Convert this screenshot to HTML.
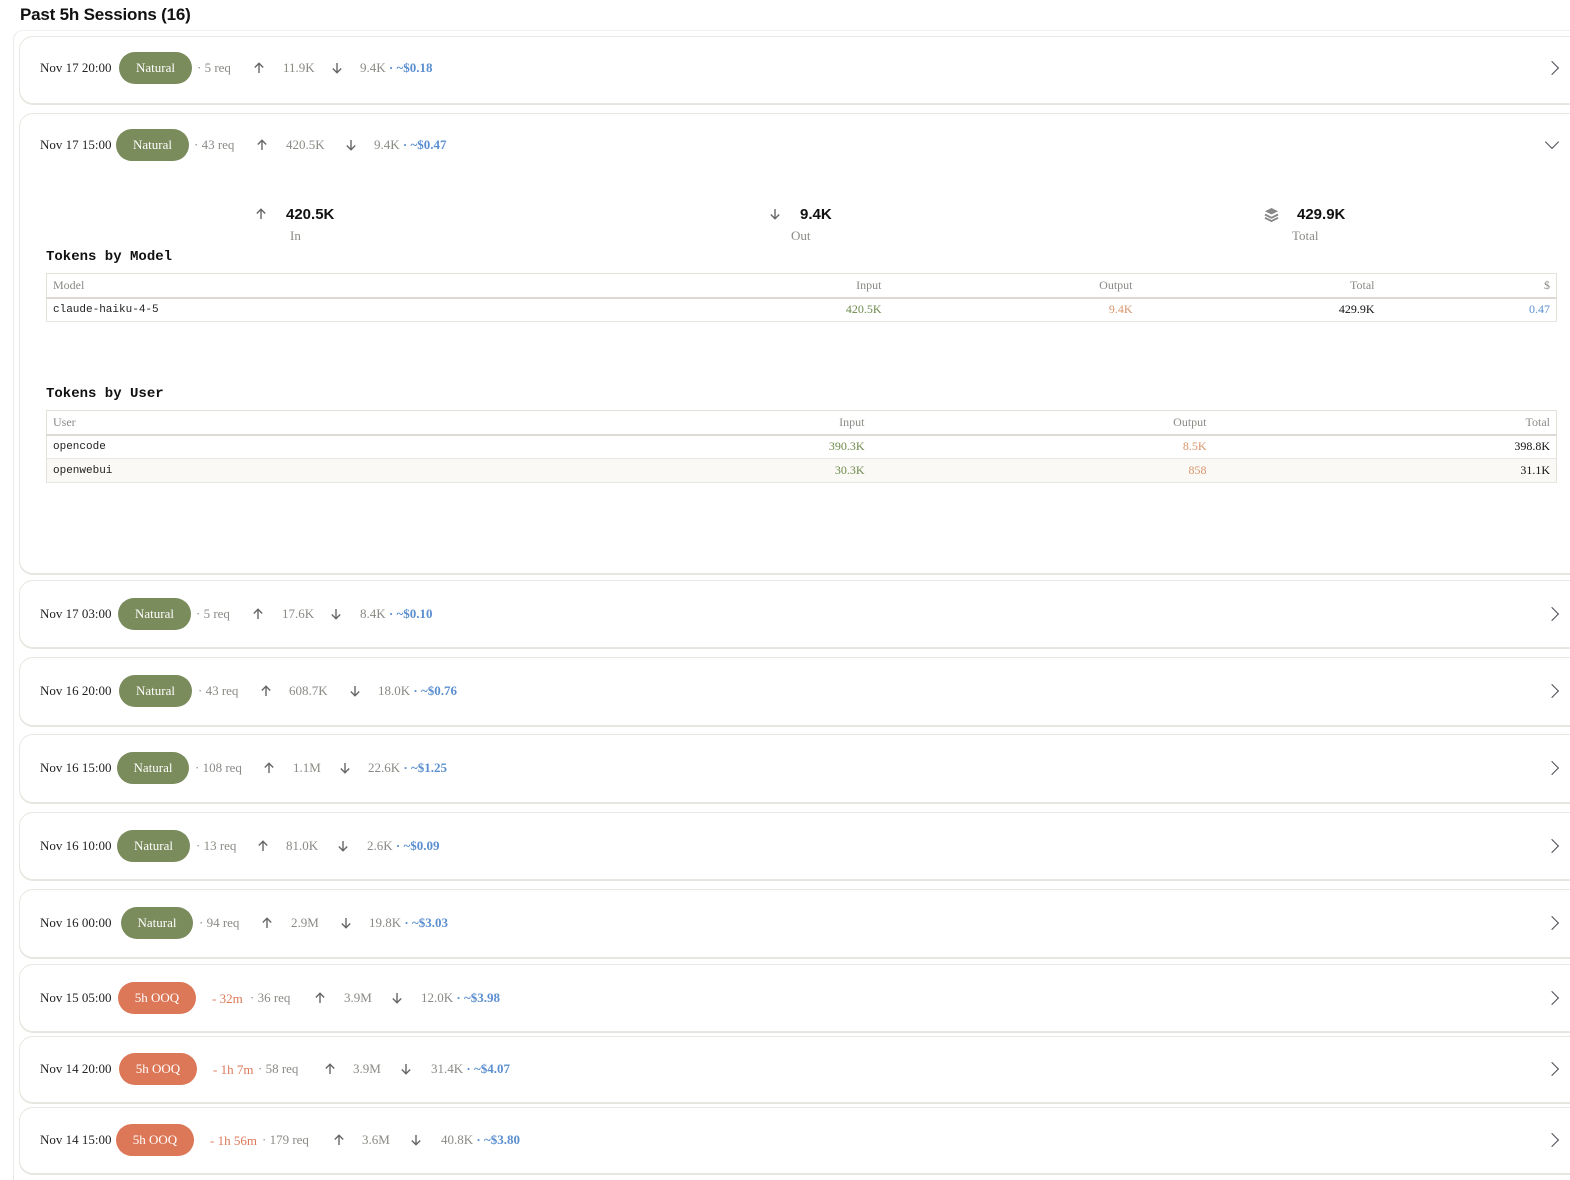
<!DOCTYPE html>
<html><head><meta charset="utf-8">
<style>
*{box-sizing:border-box;margin:0;padding:0}
html,body{width:1570px;height:1180px;overflow:hidden}
body{background:#fff;position:relative;font-family:"Liberation Serif","DejaVu Serif",serif;font-size:13px;color:#222}
.a{position:absolute;white-space:nowrap;line-height:16px}
h1{position:absolute;left:20px;top:5px;font:bold 17px "Liberation Sans",sans-serif;color:#111;letter-spacing:-0.2px}
.outer{position:absolute;left:13px;top:30px;width:1600px;height:1150px;border-left:1px solid #ebe9e4;border-top:1px solid #f1f0ec;border-radius:10px 0 0 0}
.card{position:absolute;left:19px;width:1600px;border:1.5px solid #e9e7e1;border-radius:14px;background:#fff;box-shadow:0 1px 0 #e6e4de}
.badge{position:absolute;height:32px;border-radius:16px;color:#fff;text-align:center;line-height:32px;font-size:13px}
.g{background:#7a8b5c}.o{background:#dc7757}
.m{color:#8a8a85}.c{color:#5b8fd0;font-weight:bold}.r{color:#dc7757}
svg.ar{position:absolute}
.chev{position:absolute;left:1547px;width:10px;height:10px;border-right:1.6px solid #4a4a55;border-bottom:1.6px solid #4a4a55}
.mono{font-family:"Liberation Mono",monospace}
table{position:absolute;left:46px;width:1511px;border-collapse:collapse;border:1px solid #e3e1da}
td,th{height:24px;padding:0 6px;font-size:12px;font-weight:normal}
th{color:#8a8a85;text-align:right;border-bottom:2px solid #dcdad2}
th:first-child,td:first-child{text-align:left}
td{text-align:right;border-bottom:1px solid #e8e6e0}
.gi{color:#6e8a4c}.oo{color:#d9946a}.bl{color:#5b8fd0}
</style></head><body>
<svg width="0" height="0" style="position:absolute"><defs>
<symbol id="up" viewBox="0 0 12 12"><path d="M6 11V1.5M1.8 5.5 6 1.3l4.2 4.2" stroke="#666" stroke-width="1.4" fill="none"/></symbol>
<symbol id="dn" viewBox="0 0 12 12"><path d="M6 1v9.5M1.8 6.5 6 10.7l4.2-4.2" stroke="#666" stroke-width="1.4" fill="none"/></symbol>
</defs></svg>
<h1>Past 5h Sessions (16)</h1>
<div class="outer"></div>

<!-- row 1 -->
<div class="card" style="top:36px;height:68px"></div>
<span class="a" style="left:40px;top:60px">Nov 17 20:00</span>
<div class="badge g" style="left:119px;top:52px;width:73px">Natural</div>
<span class="a m" style="left:197px;top:60px">· 5 req</span>
<svg class="ar" style="left:253px;top:62px" width="12" height="12"><use href="#up"/></svg><span class="a m" style="left:283px;top:60px">11.9K</span>
<svg class="ar" style="left:331px;top:62px" width="12" height="12"><use href="#dn"/></svg><span class="a m" style="left:360px;top:60px">9.4K <span class="c">· ~$0.18</span></span>
<div class="chev" style="top:63px;transform:rotate(-45deg)"></div>

<!-- row 2 expanded -->
<div class="card" style="top:113px;height:461px"></div>
<span class="a" style="left:40px;top:137px">Nov 17 15:00</span>
<div class="badge g" style="left:116px;top:129px;width:73px">Natural</div>
<span class="a m" style="left:194px;top:137px">· 43 req</span>
<svg class="ar" style="left:256px;top:139px" width="12" height="12"><use href="#up"/></svg><span class="a m" style="left:286px;top:137px">420.5K</span>
<svg class="ar" style="left:345px;top:139px" width="12" height="12"><use href="#dn"/></svg><span class="a m" style="left:374px;top:137px">9.4K <span class="c">· ~$0.47</span></span>
<div class="chev" style="top:137px;transform:rotate(45deg)"></div>

<svg class="ar" style="left:255px;top:208px" width="12" height="12"><use href="#up"/></svg>
<span class="a" style="left:286px;top:206px;font:bold 15px 'Liberation Sans',sans-serif;color:#111">420.5K</span>
<span class="a m" style="left:290px;top:228px">In</span>
<svg class="ar" style="left:769px;top:208px" width="12" height="12"><use href="#dn"/></svg>
<span class="a" style="left:800px;top:206px;font:bold 15px 'Liberation Sans',sans-serif;color:#111">9.4K</span>
<span class="a m" style="left:791px;top:228px">Out</span>
<svg class="a" style="left:1264px;top:207px" width="15" height="15" viewBox="0 0 16 16"><path d="M8 1 15 4.5 8 8 1 4.5Z" fill="#888"/><path d="M1 8 8 11.5 15 8" stroke="#888" stroke-width="2" fill="none"/><path d="M1 11.5 8 15 15 11.5" stroke="#888" stroke-width="2" fill="none"/></svg>
<span class="a" style="left:1297px;top:206px;font:bold 15px 'Liberation Sans',sans-serif;color:#111">429.9K</span>
<span class="a m" style="left:1292px;top:228px">Total</span>

<span class="a mono" style="left:46px;top:249px;font-weight:bold;font-size:14px;color:#111">Tokens by Model</span>
<table style="top:273px">
<tr><th style="width:300px">Model</th><th style="width:541px">Input</th><th style="width:251px">Output</th><th style="width:242px">Total</th><th>$</th></tr>
<tr><td class="mono" style="font-size:11px">claude-haiku-4-5</td><td class="gi">420.5K</td><td class="oo">9.4K</td><td style="color:#111">429.9K</td><td class="bl">0.47</td></tr>
</table>

<span class="a mono" style="left:46px;top:386px;font-weight:bold;font-size:14px;color:#111">Tokens by User</span>
<table style="top:410px">
<tr><th style="width:300px">User</th><th style="width:524px">Input</th><th style="width:342px">Output</th><th>Total</th></tr>
<tr><td class="mono" style="font-size:11px">opencode</td><td class="gi">390.3K</td><td class="oo">8.5K</td><td style="color:#111">398.8K</td></tr>
<tr style="background:#faf9f5"><td class="mono" style="font-size:11px">openwebui</td><td class="gi">30.3K</td><td class="oo">858</td><td style="color:#111">31.1K</td></tr>
</table>

<!-- row 3 -->
<div class="card" style="top:580px;height:68px"></div>
<span class="a" style="left:40px;top:606px">Nov 17 03:00</span>
<div class="badge g" style="left:118px;top:598px;width:73px">Natural</div>
<span class="a m" style="left:196px;top:606px">· 5 req</span>
<svg class="ar" style="left:252px;top:608px" width="12" height="12"><use href="#up"/></svg><span class="a m" style="left:282px;top:606px">17.6K</span>
<svg class="ar" style="left:330px;top:608px" width="12" height="12"><use href="#dn"/></svg><span class="a m" style="left:360px;top:606px">8.4K <span class="c">· ~$0.10</span></span>
<div class="chev" style="top:609px;transform:rotate(-45deg)"></div>

<!-- row 4 -->
<div class="card" style="top:657px;height:69px"></div>
<span class="a" style="left:40px;top:683px">Nov 16 20:00</span>
<div class="badge g" style="left:119px;top:675px;width:73px">Natural</div>
<span class="a m" style="left:198px;top:683px">· 43 req</span>
<svg class="ar" style="left:260px;top:685px" width="12" height="12"><use href="#up"/></svg><span class="a m" style="left:289px;top:683px">608.7K</span>
<svg class="ar" style="left:349px;top:685px" width="12" height="12"><use href="#dn"/></svg><span class="a m" style="left:378px;top:683px">18.0K <span class="c">· ~$0.76</span></span>
<div class="chev" style="top:686px;transform:rotate(-45deg)"></div>

<!-- row 5 -->
<div class="card" style="top:734px;height:69px"></div>
<span class="a" style="left:40px;top:760px">Nov 16 15:00</span>
<div class="badge g" style="left:117px;top:752px;width:72px">Natural</div>
<span class="a m" style="left:195px;top:760px">· 108 req</span>
<svg class="ar" style="left:263px;top:762px" width="12" height="12"><use href="#up"/></svg><span class="a m" style="left:293px;top:760px">1.1M</span>
<svg class="ar" style="left:339px;top:762px" width="12" height="12"><use href="#dn"/></svg><span class="a m" style="left:368px;top:760px">22.6K <span class="c">· ~$1.25</span></span>
<div class="chev" style="top:763px;transform:rotate(-45deg)"></div>

<!-- row 6 -->
<div class="card" style="top:812px;height:68px"></div>
<span class="a" style="left:40px;top:838px">Nov 16 10:00</span>
<div class="badge g" style="left:117px;top:830px;width:73px">Natural</div>
<span class="a m" style="left:196px;top:838px">· 13 req</span>
<svg class="ar" style="left:257px;top:840px" width="12" height="12"><use href="#up"/></svg><span class="a m" style="left:286px;top:838px">81.0K</span>
<svg class="ar" style="left:337px;top:840px" width="12" height="12"><use href="#dn"/></svg><span class="a m" style="left:367px;top:838px">2.6K <span class="c">· ~$0.09</span></span>
<div class="chev" style="top:841px;transform:rotate(-45deg)"></div>

<!-- row 7 -->
<div class="card" style="top:889px;height:69px"></div>
<span class="a" style="left:40px;top:915px">Nov 16 00:00</span>
<div class="badge g" style="left:121px;top:907px;width:72px">Natural</div>
<span class="a m" style="left:199px;top:915px">· 94 req</span>
<svg class="ar" style="left:261px;top:917px" width="12" height="12"><use href="#up"/></svg><span class="a m" style="left:291px;top:915px">2.9M</span>
<svg class="ar" style="left:340px;top:917px" width="12" height="12"><use href="#dn"/></svg><span class="a m" style="left:369px;top:915px">19.8K <span class="c">· ~$3.03</span></span>
<div class="chev" style="top:918px;transform:rotate(-45deg)"></div>

<!-- row 8 -->
<div class="card" style="top:964px;height:68px"></div>
<span class="a" style="left:40px;top:990px">Nov 15 05:00</span>
<div class="badge o" style="left:118px;top:982px;width:78px">5h OOQ</div>
<span class="a r" style="left:212px;top:991px">- 32m</span>
<span class="a m" style="left:250px;top:990px">· 36 req</span>
<svg class="ar" style="left:314px;top:992px" width="12" height="12"><use href="#up"/></svg><span class="a m" style="left:344px;top:990px">3.9M</span>
<svg class="ar" style="left:391px;top:992px" width="12" height="12"><use href="#dn"/></svg><span class="a m" style="left:421px;top:990px">12.0K <span class="c">· ~$3.98</span></span>
<div class="chev" style="top:993px;transform:rotate(-45deg)"></div>

<!-- row 9 -->
<div class="card" style="top:1036px;height:67px"></div>
<span class="a" style="left:40px;top:1061px">Nov 14 20:00</span>
<div class="badge o" style="left:119px;top:1053px;width:78px">5h OOQ</div>
<span class="a r" style="left:213px;top:1062px">- 1h 7m</span>
<span class="a m" style="left:258px;top:1061px">· 58 req</span>
<svg class="ar" style="left:324px;top:1063px" width="12" height="12"><use href="#up"/></svg><span class="a m" style="left:353px;top:1061px">3.9M</span>
<svg class="ar" style="left:400px;top:1063px" width="12" height="12"><use href="#dn"/></svg><span class="a m" style="left:431px;top:1061px">31.4K <span class="c">· ~$4.07</span></span>
<div class="chev" style="top:1064px;transform:rotate(-45deg)"></div>

<!-- row 10 -->
<div class="card" style="top:1107px;height:67px"></div>
<span class="a" style="left:40px;top:1132px">Nov 14 15:00</span>
<div class="badge o" style="left:116px;top:1124px;width:78px">5h OOQ</div>
<span class="a r" style="left:210px;top:1133px">- 1h 56m</span>
<span class="a m" style="left:262px;top:1132px">· 179 req</span>
<svg class="ar" style="left:333px;top:1134px" width="12" height="12"><use href="#up"/></svg><span class="a m" style="left:362px;top:1132px">3.6M</span>
<svg class="ar" style="left:410px;top:1134px" width="12" height="12"><use href="#dn"/></svg><span class="a m" style="left:441px;top:1132px">40.8K <span class="c">· ~$3.80</span></span>
<div class="chev" style="top:1135px;transform:rotate(-45deg)"></div>
</body></html>
